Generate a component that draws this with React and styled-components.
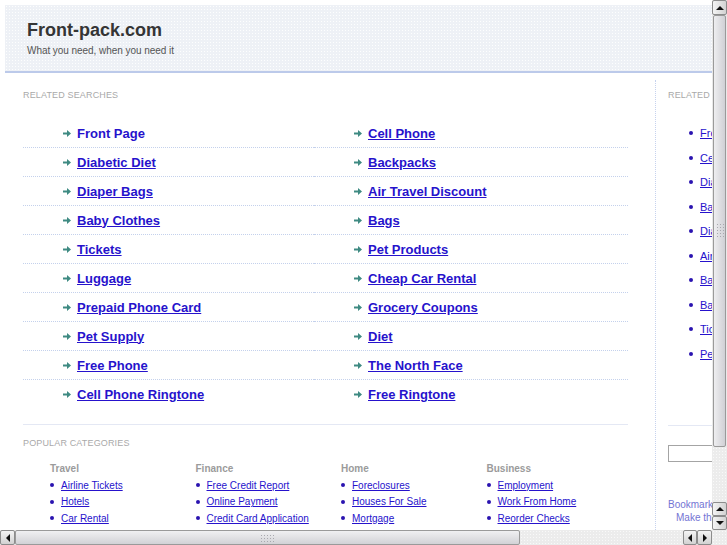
import React from "react";
import styled, { createGlobalStyle, css } from "styled-components";

const Global = createGlobalStyle`
  html, body { margin: 0; padding: 0; background: #fff; overflow: hidden; }
  body { font-family: "Liberation Sans", Arial, sans-serif; }
`;

const Frame = styled.div`
  display: grid;
  grid-template-columns: 712px 15px;
  grid-template-rows: 530px 15px;
  width: 727px;
  height: 545px;
`;

const Viewport = styled.div`
  overflow: hidden;
  background: #fff;
  position: relative;
`;

const Page = styled.div`
  width: 980px;
  height: 530px;
  display: flex;
  flex-direction: column;
`;

const Header = styled.header`
  margin: 5px 0 0 5px;
  height: 68px;
  box-sizing: border-box;
  padding: 15px 0 0 22px;
  background-color: #eef1f6;
  background-image: radial-gradient(rgba(255,255,255,0.9) 0.6px, transparent 0.8px);
  background-size: 3px 3px;
  border-bottom: 2px solid #bccaea;
  flex: none;
`;

const Title = styled.h1`
  margin: 0;
  font-size: 18px;
  line-height: 21px;
  font-weight: bold;
  color: #353535;
`;

const Tagline = styled.div`
  margin-top: 4px;
  font-size: 10px;
  line-height: 12px;
  letter-spacing: -0.05px;
  color: #555;
`;

const Body = styled.div`
  display: flex;
  margin: 7px 0 0 5px;
  flex: 1;
`;

const Main = styled.main`
  width: 651px;
  box-sizing: border-box;
  padding: 10px 27px 0 18px;
  border-right: 1px dotted #c6d2ee;
  flex: none;
`;

const Side = styled.aside`
  width: 260px;
  padding: 10px 0 0 12px;
  flex: none;
`;

const Label = styled.div`
  font-size: 9px;
  line-height: 11px;
  letter-spacing: 0.15px;
  color: #a9a9a9;
  text-transform: uppercase;
  margin-top: ${(p) => p.$mt || 0}px;
`;

const SearchGrid = styled.div`
  display: grid;
  grid-template-columns: 291px 314px;
  margin-top: 18px;
`;

const SearchRow = styled.div`
  display: flex;
  align-items: center;
  gap: 6px;
  height: 28px;
  padding-left: 40px;
  border-bottom: 1px dotted #c4d1ec;
  &:nth-last-child(-n + 2) {
    border-bottom: none;
  }
`;

const BigLink = styled.a`
  font-size: 13px;
  font-weight: bold;
  color: #2612cc;
  text-decoration: ${(p) => (p.$plain ? "none" : "underline")};
  cursor: pointer;
`;

const Divider = styled.div`
  height: 1px;
  background: #e4e8f4;
  margin-top: ${(p) => p.$mt}px;
  width: ${(p) => p.$w || "auto"};
`;

const CatGrid = styled.div`
  display: grid;
  grid-template-columns: repeat(4, 145.5px);
  padding-left: 27px;
  margin-top: 14px;
`;

const CatHead = styled.div`
  font-size: 10px;
  line-height: 12px;
  font-weight: bold;
  color: #9b9b9b;
  margin-bottom: 2px;
`;

const Bullet = styled.span`
  width: 4px;
  height: 4px;
  border-radius: 50%;
  background: #2a13b0;
  flex: none;
`;

const CatItem = styled.div`
  display: flex;
  align-items: center;
  gap: 7px;
  height: 16.5px;
`;

const SmallLink = styled.a`
  font-size: ${(p) => p.$size || 10}px;
  color: #2612cc;
  text-decoration: underline;
  white-space: nowrap;
  cursor: pointer;
`;

const SideList = styled.div`
  margin-top: 20px;
  padding-left: 21px;
`;

const SideItem = styled.div`
  display: flex;
  align-items: center;
  gap: 7px;
  height: 24.5px;
`;

const SearchBox = styled.input`
  display: block;
  margin-top: 19px;
  width: 140px;
  height: 17px;
  box-sizing: border-box;
  border: 1px solid #a4a4a4;
  background: #fff;
  padding: 0;
`;

const Bookmark = styled.div`
  font-size: 10px;
  line-height: 13px;
  color: #7474d4;
  padding-left: ${(p) => p.$indent || 0}px;
  margin-top: ${(p) => p.$mt || 0}px;
  white-space: nowrap;
`;

/* ---------- scrollbars ---------- */

const VBar = styled.div`
  display: flex;
  flex-direction: column;
  background: #e9e9e9;
`;

const HBar = styled.div`
  display: flex;
  background: #e9e9e9;
`;

const speckle = css`
  background-color: #ececec;
  background-image: radial-gradient(#f9f9f9 0.6px, transparent 0.8px);
  background-size: 3px 3px;
`;

const Trough = styled.div`
  flex: 1;
  ${speckle}
`;

const Corner = styled.div`
  ${speckle}
`;

const Btn = styled.div`
  flex: none;
  width: ${(p) => p.$w || 15}px;
  height: ${(p) => p.$h || 15}px;
  box-sizing: border-box;
  border: 1px solid #8c8c8c;
  border-radius: 2px;
  background: linear-gradient(${(p) => (p.$horiz ? "180deg" : "90deg")}, #f4f4f4, #d2d2d2);
  display: flex;
  align-items: center;
  justify-content: center;
`;

const Tri = styled.span`
  width: 0;
  height: 0;
  ${(p) =>
    p.$dir === "up"
      ? css`border-left: 4px solid transparent; border-right: 4px solid transparent; border-bottom: 4px solid #111;`
      : p.$dir === "down"
      ? css`border-left: 4px solid transparent; border-right: 4px solid transparent; border-top: 4px solid #111;`
      : p.$dir === "left"
      ? css`border-top: 4px solid transparent; border-bottom: 4px solid transparent; border-right: 4px solid #111;`
      : css`border-top: 4px solid transparent; border-bottom: 4px solid transparent; border-left: 4px solid #111;`}
`;

const Thumb = styled.div`
  flex: none;
  box-sizing: border-box;
  border: 1px solid #9a9a9a;
  border-radius: 2px;
  display: flex;
  align-items: center;
  justify-content: center;
  ${(p) =>
    p.$horiz
      ? css`
          width: ${p.$len}px;
          height: 15px;
          background: linear-gradient(180deg, #f0f0f2, #d2d2d6);
        `
      : css`
          height: ${p.$len}px;
          width: 13px;
          margin-left: 1px;
          background: linear-gradient(90deg, #eeeef0, #d0d0d5);
        `}
`;

const Grip = styled.span`
  width: ${(p) => (p.$horiz ? "16px" : "8px")};
  height: ${(p) => (p.$horiz ? "8px" : "16px")};
  background-image: radial-gradient(#a8a8ae 0.8px, transparent 1px);
  background-size: 3px 3px;
`;

const Arrow = () => (
  <svg width="8" height="7" viewBox="0 0 8 7" aria-hidden="true">
    <path d="M0 2.5h4V0l4 3.5-4 3.5V4.5H0z" fill="#3e8a82" />
  </svg>
);

const searches = [
  ["Front Page", "Cell Phone"],
  ["Diabetic Diet", "Backpacks"],
  ["Diaper Bags", "Air Travel Discount"],
  ["Baby Clothes", "Bags"],
  ["Tickets", "Pet Products"],
  ["Luggage", "Cheap Car Rental"],
  ["Prepaid Phone Card", "Grocery Coupons"],
  ["Pet Supply", "Diet"],
  ["Free Phone", "The North Face"],
  ["Cell Phone Ringtone", "Free Ringtone"],
];

const categories = [
  { head: "Travel", items: ["Airline Tickets", "Hotels", "Car Rental"] },
  { head: "Finance", items: ["Free Credit Report", "Online Payment", "Credit Card Application"] },
  { head: "Home", items: ["Foreclosures", "Houses For Sale", "Mortgage"] },
  { head: "Business", items: ["Employment", "Work From Home", "Reorder Checks"] },
];

const sideLinks = [
  "Front Page",
  "Cell Phone",
  "Diabetic Diet",
  "Backpacks",
  "Diaper Bags",
  "Air Travel Discount",
  "Baby Clothes",
  "Bags",
  "Tickets",
  "Pet Products",
];

export default function App() {
  return (
    <>
      <Global />
      <Frame>
        <Viewport>
          <Page>
            <Header>
              <Title>Front-pack.com</Title>
              <Tagline>What you need, when you need it</Tagline>
            </Header>
            <Body>
              <Main>
                <Label>Related Searches</Label>
                <SearchGrid>
                  {searches.flat().map((s, i) => (
                    <SearchRow key={s + i}>
                      <Arrow />
                      <BigLink $plain={i === 0}>{s}</BigLink>
                    </SearchRow>
                  ))}
                </SearchGrid>
                <Divider $mt={16} />
                <Label $mt={13}>Popular Categories</Label>
                <CatGrid>
                  {categories.map((c) => (
                    <div key={c.head}>
                      <CatHead>{c.head}</CatHead>
                      {c.items.map((it) => (
                        <CatItem key={it}>
                          <Bullet />
                          <SmallLink>{it}</SmallLink>
                        </CatItem>
                      ))}
                    </div>
                  ))}
                </CatGrid>
              </Main>
              <Side>
                <Label>Related Searches</Label>
                <SideList>
                  {sideLinks.map((s) => (
                    <SideItem key={s}>
                      <Bullet />
                      <SmallLink $size={11}>{s}</SmallLink>
                    </SideItem>
                  ))}
                </SideList>
                <Divider $mt={59} $w="200px" />
                <SearchBox type="text" />
                <Bookmark $mt={36}>Bookmark this page</Bookmark>
                <Bookmark $indent={8}>Make this your homepage</Bookmark>
              </Side>
            </Body>
          </Page>
        </Viewport>
        <VBar>
          <Btn>
            <Tri $dir="up" />
          </Btn>
          <Thumb $len={432}>
            <Grip />
          </Thumb>
          <Trough />
          <Btn $h={14}>
            <Tri $dir="up" />
          </Btn>
          <Btn $h={14}>
            <Tri $dir="down" />
          </Btn>
        </VBar>
        <HBar>
          <Btn $horiz>
            <Tri $dir="left" />
          </Btn>
          <Thumb $horiz $len={505}>
            <Grip $horiz />
          </Thumb>
          <Trough />
          <Btn $horiz $w={14}>
            <Tri $dir="left" />
          </Btn>
          <Btn $horiz>
            <Tri $dir="right" />
          </Btn>
        </HBar>
        <Corner />
      </Frame>
    </>
  );
}
